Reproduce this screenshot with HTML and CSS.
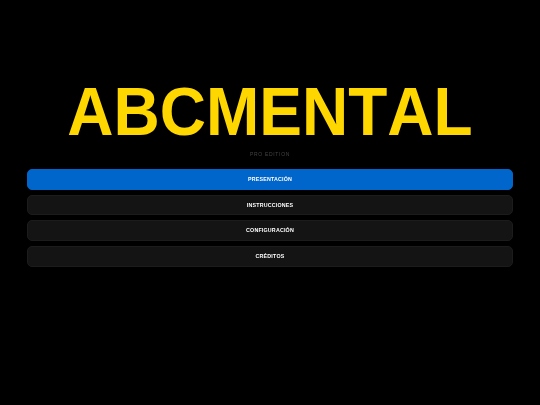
FILE: index.html
```html
<!DOCTYPE html>
<html lang="es">
<head>
    <meta charset="UTF-8">
    <meta name="viewport" content="width=device-width, initial-scale=1.0">
    <title>ABCMental</title>
    <link rel="stylesheet" href="styles.css">
</head>
<body>
    <div class="menu">
        <h1 class="logo">ABCMENTAL</h1>
        <div class="edition">PRO EDITION</div>
        <div class="botones">
            <div class="boton activo">PRESENTACIÓN</div>
            <div class="boton">INSTRUCCIONES</div>
            <div class="boton">CONFIGURACIÓN</div>
            <div class="boton">CRÉDITOS</div>
        </div>
    </div>
</body>
</html>
```

FILE: styles.css
```css
body {
    font-family: "Liberation Sans", Arial, sans-serif;
    background-color: #000;
    margin: 0;
    height: 405px;
    overflow: hidden;
}
.menu {
    display: flex;
    flex-direction: column;
    align-items: center;
    padding: 74.5px 27px 0;
    will-change: transform;
}
.logo {
    color: #ffd700;
    font-size: 64px;
    line-height: 74px;
    font-weight: bold;
    font-kerning: none;
    margin: 0;
    transform: scaleY(1.06);
}
.edition {
    color: #444;
    font-size: 5px;
    line-height: 7px;
    letter-spacing: 0.7px;
    margin-top: 2.5px;
}
.botones {
    display: flex;
    flex-direction: column;
    gap: 5.1px;
    width: 100%;
    margin-top: 11px;
}
.boton {
    background-color: #141414;
    border: 1px solid #1c1c1c;
    border-radius: 5px;
    color: #fff;
    font-size: 5.3px;
    font-weight: bold;
    letter-spacing: 0.2px;
    line-height: 18.6px;
    text-align: center;
}
.activo {
    background-color: #0066cc;
    border-color: #0066cc;
}
```
